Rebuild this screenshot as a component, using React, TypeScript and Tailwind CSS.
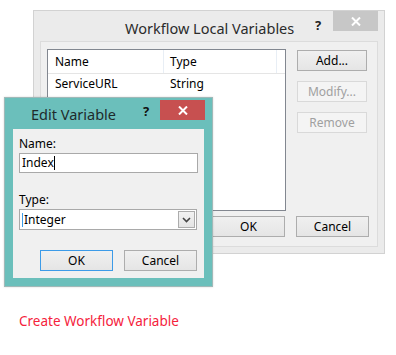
import React from "react";

const font = { fontFamily: '"Noto Sans", "Open Sans", sans-serif' };

function Btn({ label, w, disabled, focus }: { label: string; w: string; disabled?: boolean; focus?: boolean }) {
  return (
    <div
      className={`${w} h-[21px] flex items-center justify-center text-[12px] border ${
        disabled
          ? "border-[#d9d9d9] bg-[#f4f4f4] text-[#a0a0a0]"
          : focus
          ? "border-[#3c9be8] bg-gradient-to-b from-[#f0f0f0] to-[#e5e5e5] text-black"
          : "border-[#adadad] bg-gradient-to-b from-[#f0f0f0] to-[#e5e5e5] text-black"
      }`}
    >
      {label}
    </div>
  );
}

function CloseX({ color }: { color: string }) {
  return (
    <svg width="10" height="9" viewBox="0 0 10 9">
      <path d="M1 0.5 L9 8.5 M9 0.5 L1 8.5" stroke={color} strokeWidth="2" />
    </svg>
  );
}

export default function App() {
  return (
    <div className="relative w-[396px] h-[355px] bg-white overflow-hidden" style={font}>
      {/* Back dialog */}
      <div className="absolute left-[33px] top-[10px] w-[352px] h-[244px] bg-[#ebebeb] border border-[#d2d2d2] flex flex-col">
        <div className="h-[30px] flex items-start relative">
          <div className="absolute left-[91px] top-[5px] text-[14.5px] text-[#2b2b2b] leading-[24px]">Workflow Local Variables</div>
          <div className="absolute left-[281px] top-[5px] text-[13px] font-bold text-[#222]">?</div>
          <div className="absolute left-[299px] top-0 w-[45px] h-[20px] bg-[#c7c7c7] flex items-center justify-center">
            <CloseX color="#ffffff" />
          </div>
        </div>
        <div className="mx-[6px] h-[206px] bg-[#f0f0f0] border border-[#dcdcdc] pl-[6px] pt-[7px] flex flex-col">
          <div className="flex">
            <div className="w-[239px] h-[162px] bg-white border border-[#828790] flex flex-col text-[12px] text-black">
              <div className="h-[24px] flex items-center border-b border-[#e5e5e5]">
                <div className="w-[116px] h-full pl-[7px] flex items-center border-r border-[#e8eef5]">Name</div>
                <div className="w-[113px] h-full pl-[6px] flex items-center border-r border-[#e8eef5]">Type</div>
              </div>
              <div className="h-[20px] flex items-center">
                <div className="w-[116px] pl-[7px]">ServiceURL</div>
                <div className="pl-[6px]">String</div>
              </div>
            </div>
            <div className="ml-[11px] pt-[1px] flex flex-col gap-[10px]">
              <Btn label="Add..." w="w-[70px]" />
              <Btn label="Modify..." w="w-[70px]" disabled />
              <Btn label="Remove" w="w-[70px]" disabled />
            </div>
          </div>
          <div className="mt-[5px] ml-[165px] flex gap-[11px]">
            <Btn label="OK" w="w-[73px]" />
            <Btn label="Cancel" w="w-[73px]" />
          </div>
        </div>
      </div>

      {/* Front dialog */}
      <div className="absolute left-[4px] top-[97px] w-[209px] h-[190px] border border-[#9fb9b8] shadow-[0_0_2px_rgba(0,0,0,0.15)]">
        <div className="w-full h-full bg-[#6bbfbb] flex flex-col">
          <div className="h-[31px] relative">
            <div className="absolute left-[26px] top-[4px] text-[14.5px] text-[#1e2b2b] leading-[24px]">Edit Variable</div>
            <div className="absolute left-[138px] top-[4px] text-[13px] font-bold text-[#111]">?</div>
            <div className="absolute left-[155px] top-[2px] w-[45px] h-[20px] bg-[#c75050] flex items-center justify-center">
              <CloseX color="#ffffff" />
            </div>
          </div>
          <div className="mx-[8px] h-[149px] bg-[#f0f0f0] px-[6px] pt-[7px] flex flex-col text-[12px] text-black">
            <div className="leading-[16px]">Name:</div>
            <div className="mt-[1px] w-[179px] h-[20px] bg-white border border-[#a9a9a9] flex items-center pl-[2px]">
              <span>Index</span>
              <span className="w-[1px] h-[14px] bg-black" />
            </div>
            <div className="mt-[19px] leading-[16px]">Type:</div>
            <div className="mt-[1px] w-[178px] h-[21px] bg-white border border-[#a9a9a9] flex items-center">
              <span className="w-[1px] h-[14px] bg-[#3c9be8] ml-[2px]" />
              <span className="ml-[1px] flex-1">Integer</span>
              <div className="w-[17px] h-[17px] mr-[1px] border border-[#acacac] bg-gradient-to-b from-[#f2f2f2] to-[#e4e4e4] flex items-center justify-center">
                <svg width="9" height="6" viewBox="0 0 9 6">
                  <path d="M1 1 L4.5 4.5 L8 1" stroke="#444" strokeWidth="1.6" fill="none" />
                </svg>
              </div>
            </div>
            <div className="mt-[20px] ml-[21px] flex gap-[11px]">
              <Btn label="OK" w="w-[73px]" focus />
              <Btn label="Cancel" w="w-[73px]" />
            </div>
          </div>
        </div>
      </div>

      <div className="absolute left-[19px] top-[311px] text-[13.5px] text-[#f5223c] leading-[20px]">Create Workflow Variable</div>
    </div>
  );
}
